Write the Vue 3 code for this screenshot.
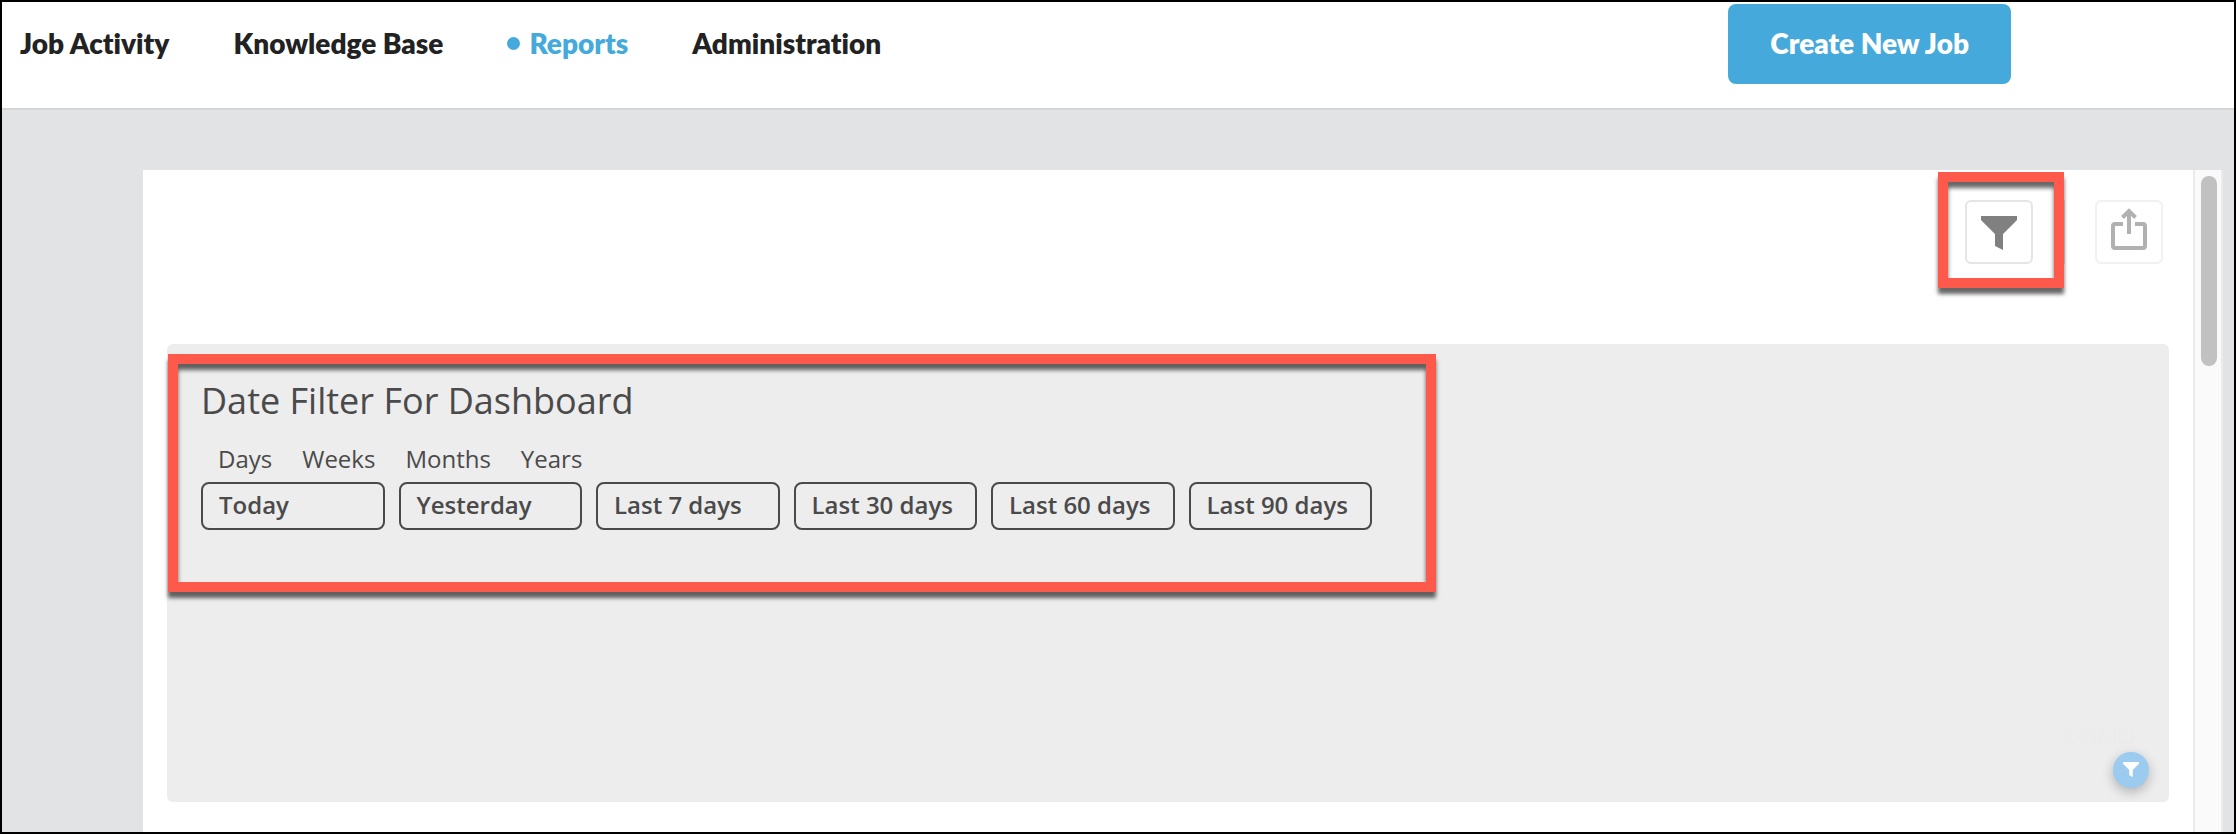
<script setup>
import { ref } from "vue"

const links = ["Job Activity", "Knowledge Base", "Reports", "Administration"]
const activeLink = ref("Reports")

const periods = ["Days", "Weeks", "Months", "Years"]
const ranges = ["Today", "Yesterday", "Last 7 days", "Last 30 days", "Last 60 days", "Last 90 days"]
</script>

<template>
    <div class="page">
        <header class="top-bar">
            <nav class="nav">
                <a v-for="link in links" :key="link" href="#" class="nav-link"
                    :class="{ active: link === activeLink }" @click.prevent="activeLink = link">{{ link }}</a>
            </nav>
            <button type="button" class="create-btn">Create New Job</button>
        </header>

        <main class="panel">
            <div class="content">
                <div class="toolbar">
                    <div class="highlight filter-highlight">
                        <button type="button" class="icon-btn" aria-label="Filter">
                            <svg class="filter-icon" viewBox="0 0 36 34">
                                <path d="M0 0h36v4L22 18v16l-8-4V18L0 4z" />
                            </svg>
                        </button>
                    </div>
                    <div class="share">
                        <button type="button" class="icon-btn light" aria-label="Share">
                            <svg class="share-icon" viewBox="0 0 36 42">
                                <path d="M12 16H4a2 2 0 0 0-2 2v20a2 2 0 0 0 2 2h28a2 2 0 0 0 2-2V18a2 2 0 0 0-2-2h-8" />
                                <path d="M18 26V3M11.500 9.500L18 3l6.500 6.500" />
                            </svg>
                        </button>
                    </div>
                </div>

                <section class="card">
                    <div class="highlight date-filter">
                        <h1 class="title">Date Filter For Dashboard</h1>
                        <div class="periods">
                            <button v-for="period in periods" :key="period" type="button" class="period">{{ period }}</button>
                        </div>
                        <div class="ranges">
                            <button v-for="range in ranges" :key="range" type="button" class="range">{{ range }}</button>
                        </div>
                    </div>
                    <span class="watermark">DOMO</span>
                    <button type="button" class="floating-btn" aria-label="Page filters">
                        <svg class="floating-btn-icon" viewBox="0 0 36 34">
                            <path d="M0 0h36v4L22 18v16l-8-4V18L0 4z" />
                        </svg>
                    </button>
                </section>
            </div>
            <div class="scroll-track">
                <div class="scroll-thumb"></div>
            </div>
        </main>
    </div>
</template>

<style>
body {
    margin: 0;
}
</style>

<style scoped>
.page {
    box-sizing: border-box;
    display: flex;
    flex-direction: column;
    min-height: 100vh;
    border: 2px solid #000;
    background-color: #e2e3e5;
    font-family: "Open Sans", sans-serif;
    color: #4a4a4a;
}

button {
    box-sizing: border-box;
    margin: 0;
    padding: 0;
    border: none;
    background: none;
    color: inherit;
    font-family: inherit;
    cursor: pointer;
}

svg {
    display: block;
}

/* Header */
.top-bar {
    display: flex;
    justify-content: space-between;
    padding: 2px 223px 24px 18px;
    border-bottom: 2px solid #d4d5d5;
    background-color: #fff;
    font-family: Lato, sans-serif;
    font-variant-ligatures: none;
}

.nav {
    display: flex;
    align-items: center;
    gap: 64px;
    padding-bottom: 2px;
}

.nav-link {
    display: flex;
    align-items: center;
    color: #222;
    font-size: 28px;
    font-weight: 800;
    line-height: 34px;
    text-decoration: none;
}

.nav-link.active {
    color: #45aadb;
}

.nav-link.active::before {
    content: "";
    width: 13px;
    height: 13px;
    margin-right: 9px;
    border-radius: 50%;
    background-color: #45aadb;
}

.create-btn {
    height: 80px;
    padding: 0 42px 2px;
    border-radius: 8px;
    background-color: #45aadb;
    color: #fff;
    font-size: 28px;
    font-weight: 800;
}

/* Dashboard panel */
.panel {
    flex: 1;
    display: flex;
    margin: 60px 11px 0 141px;
    background-color: #fff;
}

.content {
    flex: 1;
    display: flex;
    flex-direction: column;
    padding: 2px 24px 30px;
}

.toolbar {
    display: flex;
    justify-content: flex-end;
    align-items: flex-start;
    padding: 0 6px 56px 0;
}

/* Red call-out frame */
.highlight {
    border: 10px solid #ff594c;
    box-shadow: 0 6px 4px rgba(0, 0, 0, 0.6), inset 0 6px 4px rgba(0, 0, 0, 0.6);
}

.filter-highlight {
    padding: 18px 21px 14px 17px;
}

.share {
    margin-top: 28px;
    padding-left: 30px;
    border-left: 1px solid #aaa;
}

.icon-btn {
    display: flex;
    justify-content: center;
    width: 68px;
    height: 64px;
    border: 2px solid #e5e5e5;
    border-radius: 6px;
}

.icon-btn.light {
    border-color: #f1f1f1;
}

.filter-icon {
    width: 36px;
    height: 34px;
    margin-top: 14px;
    fill: #808080;
}

.share-icon {
    width: 36px;
    height: 42px;
    margin-top: 6px;
    fill: none;
    stroke: #b1b1b1;
    stroke-width: 4;
}

.card {
    position: relative;
    flex: 1;
    padding: 10px 1px;
    border-radius: 6px;
    background-color: #ededed;
}

.date-filter {
    box-sizing: border-box;
    max-width: 1268px;
    padding: 12px 54px 52px 23px;
}

.title {
    margin: 0;
    font-size: 36px;
    font-weight: 400;
    line-height: 50px;
}

.periods {
    display: flex;
    gap: 30px;
    padding: 17px 0 7px 17px;
}

.period {
    font-size: 24px;
    line-height: 32px;
}

.ranges {
    display: grid;
    grid-template-columns: repeat(6, 1fr);
    gap: 14px;
}

.range {
    height: 48px;
    padding: 0 16px 2px;
    border: 2px solid #4a4a4a;
    border-radius: 8px;
    font-size: 24px;
    font-weight: 600;
    line-height: 32px;
    text-align: left;
    white-space: nowrap;
}

.watermark {
    position: absolute;
    right: 34px;
    bottom: 54px;
    color: #ebebeb;
    font-family: Lato, sans-serif;
    font-size: 22px;
    font-weight: 300;
    line-height: 24px;
}

.floating-btn {
    position: absolute;
    right: 20px;
    bottom: 14px;
    display: flex;
    justify-content: center;
    width: 36px;
    height: 36px;
    border-radius: 50%;
    background-color: #9bcbee;
    box-shadow: 0 4px 12px rgba(0, 0, 0, 0.25);
}

.floating-btn-icon {
    width: 16px;
    height: 15px;
    margin-top: 10px;
    fill: #fff;
}

/* Scrollbar */
.scroll-track {
    box-sizing: border-box;
    width: 30px;
    padding: 6px 4px 0 6px;
    border: solid #ebebeb;
    border-width: 0 2px;
    background-color: #fafafa;
}

.scroll-thumb {
    width: 16px;
    height: 190px;
    border-radius: 8px;
    background-color: #c1c1c1;
}
</style>
